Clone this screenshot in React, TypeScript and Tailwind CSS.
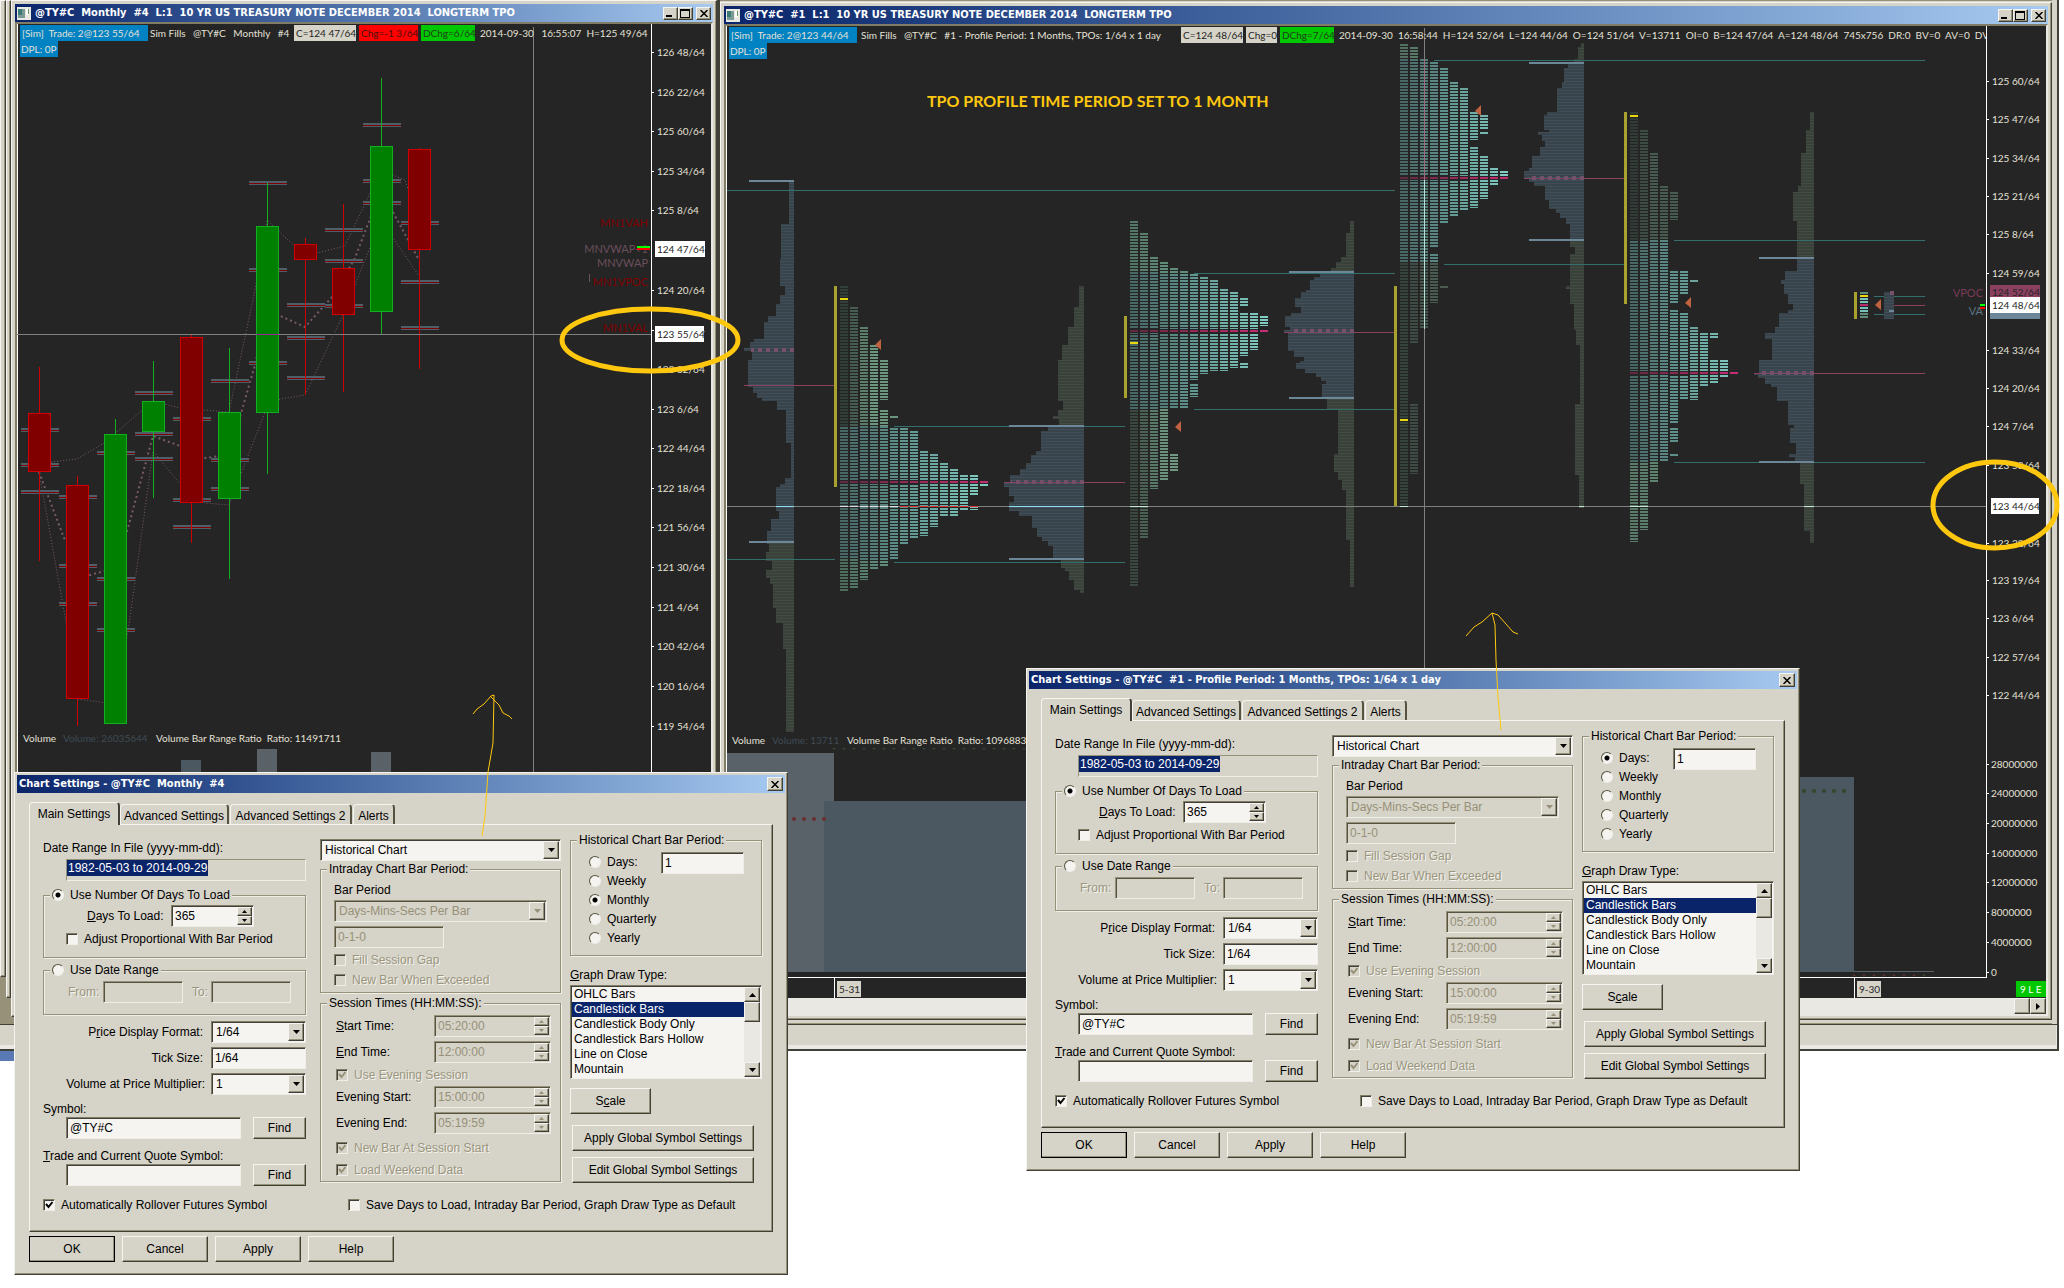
import { useId, type ReactNode } from "react";

const RAISED =
  "bg-[#d6d3c8] border border-t-[#f5f4f0] border-l-[#f5f4f0] border-b-[#404038] border-r-[#404038] shadow-[inset_-1px_-1px_0_#969178]";
const SUNKEN =
  "border border-t-[#807c66] border-l-[#807c66] border-b-[#efeee8] border-r-[#efeee8] shadow-[inset_1px_1px_0_#404038]";
const SUNKEN_OFF =
  "border border-t-[#969178] border-l-[#969178] border-b-[#efeee8] border-r-[#efeee8] shadow-[inset_1px_1px_0_#55523f]";
const GREYED = "text-[#9a967e] [text-shadow:1px_1px_0_#f5f4f0]";

/* ---------- small controls ---------- */

function Tri({ dir, off }: { dir: "up" | "down" | "right"; off?: boolean }) {
  const d = { up: "M0 4h7L3.500 0z", down: "M0 0h7L3.500 4z", right: "M0 0v7L4 3.500z" }[dir];
  return (
    <svg width={dir === "right" ? 4 : 7} height={dir === "right" ? 7 : 4} fill={off ? "#969178" : "#000"}>
      <path d={d} />
    </svg>
  );
}

function Check({ label, checked, off }: { label: string; checked?: boolean; off?: boolean }) {
  return (
    <label className={`flex h-4 items-center gap-1.5 whitespace-nowrap ${off ? GREYED : ""}`}>
      <span className="relative h-3 w-3 shrink-0">
        <input
          type="checkbox"
          defaultChecked={checked}
          disabled={off}
          className={`block h-3 w-3 appearance-none ${SUNKEN} ${off ? "bg-[#d6d3c8]" : "bg-[#f5f4f0]"}`}
        />
        {checked && (
          <svg className="pointer-events-none absolute top-0 left-0" width="12" height="12" fill="none" stroke={off ? "#969178" : "#000"} strokeWidth="2">
            <path d="M3 5l2.500 3L9.500 3" />
          </svg>
        )}
      </span>
      {label}
    </label>
  );
}

function Radio({ name, label, checked }: { name: string; label: string; checked?: boolean }) {
  return (
    <label className="flex items-center gap-1.5 whitespace-nowrap">
      <input
        type="radio"
        name={name}
        defaultChecked={checked}
        className="h-3 w-3 shrink-0 appearance-none rounded-full border border-t-[#55523f] border-l-[#55523f] border-r-[#efeee8] border-b-[#efeee8] bg-[#f5f4f0] checked:bg-[radial-gradient(circle,#000_0_2px,#f5f4f0_3px)]"
      />
      {label}
    </label>
  );
}

function Push({ children, className = "", strong }: { children: ReactNode; className?: string; strong?: boolean }) {
  return (
    <button className={`${RAISED} whitespace-nowrap ${strong ? "outline outline-1 -outline-offset-1 outline-black" : ""} ${className}`}>
      {children}
    </button>
  );
}

function Drop({ id, value, off, className = "", label }: { id?: string; value: string; off?: boolean; className?: string; label?: string }) {
  return (
    <span className={`relative block h-[22px] ${className}`}>
      <select
        id={id}
        aria-label={label}
        disabled={off}
        className={`h-full w-full appearance-none pl-1 opacity-100 ${off ? `${SUNKEN_OFF} bg-[#d6d3c8] text-[#969178]` : `${SUNKEN} bg-[#f5f4f0]`}`}
      >
        <option>{value}</option>
      </select>
      <span className={`pointer-events-none absolute top-0.5 right-0.5 bottom-0.5 flex w-4 items-center justify-center ${RAISED}`}>
        <Tri dir="down" off={off} />
      </span>
    </span>
  );
}

function Spin({ id, value, off, className = "" }: { id: string; value: string; off?: boolean; className?: string }) {
  return (
    <span className={`flex h-[22px] p-px ${off ? `${SUNKEN_OFF} bg-[#d6d3c8]` : `${SUNKEN} bg-[#f5f4f0]`} ${className}`}>
      <input id={id} defaultValue={value} disabled={off} className={`w-0 flex-1 bg-transparent pl-0.5 ${off ? "text-[#969178]" : ""}`} />
      <span className="flex w-[15px] flex-col">
        <button aria-label="Increase" disabled={off} className={`flex flex-1 items-center justify-center ${RAISED}`}>
          <svg width="5" height="3" fill={off ? "#969178" : "#000"}><path d="M0 3h5L2.500 0z" /></svg>
        </button>
        <button aria-label="Decrease" disabled={off} className={`flex flex-1 items-center justify-center ${RAISED}`}>
          <svg width="5" height="3" fill={off ? "#969178" : "#000"}><path d="M0 0h5L2.500 3z" /></svg>
        </button>
      </span>
    </span>
  );
}

function Box({ id, value, off, className = "", label }: { id?: string; value?: string; off?: boolean; className?: string; label?: string }) {
  return (
    <input
      id={id}
      aria-label={label}
      defaultValue={value}
      disabled={off}
      className={`block h-[22px] pl-[3px] ${off ? `${SUNKEN_OFF} bg-[#d6d3c8] text-[#969178]` : `${SUNKEN} bg-[#f5f4f0]`} ${className}`}
    />
  );
}

function Group({ legend, className = "", children }: { legend: ReactNode; className?: string; children: ReactNode }) {
  return (
    <fieldset className={`border border-[#969178] shadow-[1px_1px_0_#efeee8,inset_1px_1px_0_#efeee8] ${className}`}>
      <legend className="ml-1.5 h-3.5 bg-[#d6d3c8] px-0.5 leading-[14px]">{legend}</legend>
      {children}
    </fieldset>
  );
}

/* ---------- settings dialog ---------- */

const DRAW_TYPES = ["OHLC Bars", "Candlestick Bars", "Candlestick Body Only", "Candlestick Bars Hollow", "Line on Close", "Mountain"];
const TABS = [
  { name: "Advanced Settings", width: "w-[109px]" },
  { name: "Advanced Settings 2", width: "w-[122px]" },
  { name: "Alerts", width: "w-[42px]" },
];

function SettingsDialog({ title, period, className }: { title: string; period: string; className: string }) {
  const uid = useId();
  const TimeRow = ({ k, label, value, className: c }: { k: string; label: ReactNode; value: string; className: string }) => (
    <div className={`flex h-[22px] items-center justify-between pr-[9px] pl-[15px] ${c}`}>
      <label htmlFor={uid + k}>{label}</label>
      <Spin id={uid + k} value={value} off className="w-[117px]" />
    </div>
  );
  return (
    <section
      role="dialog"
      aria-label={title}
      className={`absolute flex h-[503px] w-[774px] flex-col p-0.5 font-['Liberation_Sans',Arial,sans-serif] text-xs leading-4 text-black ${RAISED} ${className}`}
    >
      <header className="flex h-[18px] shrink-0 items-center justify-between bg-linear-to-r from-[#0a246a] to-[#a6caf0] pr-0.5 pl-0.5">
        <h2 className="font-['DejaVu_Sans_Condensed','DejaVu_Sans',sans-serif] text-[11px] font-bold whitespace-pre text-white">{title}</h2>
        <button aria-label="Close" className={`flex h-3.5 w-4 items-center justify-center ${RAISED}`}>
          <svg width="8" height="7" stroke="#000" strokeWidth="1.500"><path d="M.5 0l7 7M7.500 0l-7 7" /></svg>
        </button>
      </header>

      <div className="flex flex-col px-3 pt-[9px]">
        <nav role="tablist" className="flex h-[22px] items-end">
          <button role="tab" aria-selected className="relative -mb-px h-[23px] w-[91px] rounded-t-sm border-t border-r-2 border-l border-t-[#f5f4f0] border-r-[#404038] border-l-[#f5f4f0] bg-[#d6d3c8]">
            Main Settings
          </button>
          {TABS.map((t) => (
            <button key={t.name} role="tab" aria-selected={false} className={`mr-px h-5 rounded-t-sm border-t border-r-2 border-l border-t-[#f5f4f0] border-r-[#55523f] border-l-[#f5f4f0] pt-0.5 whitespace-nowrap ${t.width}`}>
              {t.name}
            </button>
          ))}
        </nav>

        <div className="h-[408px] border border-t-[#f5f4f0] border-r-[#404038] border-b-[#404038] border-l-[#f5f4f0] pl-[13px] shadow-[inset_-1px_-1px_0_#969178]">
          <div className="flex">
            {/* data range, format and symbol */}
            <div className="flex w-[263px] flex-col">
              <label htmlFor={uid + "range"} className="mt-[15px] h-4">Date Range In File (yyyy-mm-dd):</label>
              <div id={uid + "range"} className="mt-[3px] ml-[23px] h-[22px] border border-t-[#969178] border-l-[#969178] border-r-[#efeee8] border-b-[#efeee8]">
                <span className="block h-4 w-fit bg-[#0a246a] px-px leading-4 text-white">1982-05-03 to 2014-09-29</span>
              </div>

              <Group className="mt-[7px] h-[70px]" legend={<Radio name={uid + "load"} label="Use Number Of Days To Load" checked />}>
                <div className="mt-[3px] flex h-[22px] items-center pl-[43px]">
                  <label htmlFor={uid + "days"} className="w-[84px]"><u>D</u>ays To Load:</label>
                  <Spin id={uid + "days"} value="365" className="w-[83px]" />
                </div>
                <div className="mt-1 pl-[22px]"><Check label="Adjust Proportional With Bar Period" /></div>
              </Group>
              <Group className="mt-[5px] h-[52px]" legend={<Radio name={uid + "load"} label="Use Date Range" />}>
                <div className="mt-1 flex h-[22px] items-center pl-6">
                  <label htmlFor={uid + "from"} className={`w-[35px] ${GREYED}`}>From:</label>
                  <Box id={uid + "from"} off className="w-20" />
                  <label htmlFor={uid + "to"} className={`ml-[9px] w-[19px] ${GREYED}`}>To:</label>
                  <Box id={uid + "to"} off className="w-20" />
                </div>
              </Group>

              <div className="mt-1.5 flex h-[22px] items-center justify-end gap-2">
                <label htmlFor={uid + "fmt"}>P<u>r</u>ice Display Format:</label>
                <Drop id={uid + "fmt"} value="1/64" className="w-[95px]" />
              </div>
              <div className="mt-1 flex h-[22px] items-center justify-end gap-2">
                <label htmlFor={uid + "tick"}>Tick Size:</label>
                <Box id={uid + "tick"} value="1/64" className="w-[95px]" />
              </div>
              <div className="mt-1 flex h-[22px] items-center justify-end gap-1.5">
                <label htmlFor={uid + "mult"}>Volume at Price Multiplier:</label>
                <Drop id={uid + "mult"} value="1" className="w-[95px]" />
              </div>

              <label htmlFor={uid + "sym"} className="mt-1.5 h-4">Symbol:</label>
              <div className="flex h-[22px] justify-between pl-[23px]">
                <Box id={uid + "sym"} value="@TY#C" className="w-[175px]" />
                <Push className="w-[53px]">Find</Push>
              </div>
              <label htmlFor={uid + "trade"} className="mt-[9px] h-4"><u>T</u>rade and Current Quote Symbol:</label>
              <div className="flex h-[22px] justify-between pl-[23px]">
                <Box id={uid + "trade"} className="w-[175px]" />
                <Push className="w-[53px]">Find</Push>
              </div>
            </div>

            {/* intraday period and session times */}
            <div className="ml-3.5 flex w-[241px] flex-col">
              <Drop value="Historical Chart" label="Chart type" className="mt-3.5 w-full" />
              <Group className="mt-px h-[131px]" legend="Intraday Chart Bar Period:">
                <div className="flex flex-col items-start pl-[13px]">
                  <label htmlFor={uid + "bp"} className="mt-1.5 h-4">Bar Period</label>
                  <Drop id={uid + "bp"} value="Days-Mins-Secs Per Bar" off className="mt-0.5 w-[213px]" />
                  <Box label="Bar period value" value="0-1-0" off className="mt-1 w-[110px]" />
                  <div className="mt-1"><Check label="Fill Session Gap" off /></div>
                  <div className="mt-1"><Check label="New Bar When Exceeded" off /></div>
                </div>
              </Group>
              <Group className="mt-[3px] h-[186px]" legend="Session Times (HH:MM:SS):">
                <TimeRow k="st" label={<><u>S</u>tart Time:</>} value="05:20:00" className="mt-[5px]" />
                <TimeRow k="et" label={<><u>E</u>nd Time:</>} value="12:00:00" className="mt-1" />
                <div className="mt-1 pl-[15px]"><Check label="Use Evening Session" checked off /></div>
                <TimeRow k="es" label="Evening Start:" value="15:00:00" className="mt-[3px]" />
                <TimeRow k="ee" label="Evening End:" value="05:19:59" className="mt-1" />
                <div className="mt-1.5 pl-[15px]"><Check label="New Bar At Session Start" checked off /></div>
                <div className="mt-1.5 pl-[15px]"><Check label="Load Weekend Data" checked off /></div>
              </Group>
            </div>

            {/* historical period and graph type */}
            <div className="ml-[9px] flex w-48 flex-col">
              <Group className="mt-2 h-[123px]" legend="Historical Chart Bar Period:">
                <div className="mt-[5px] flex items-start justify-between pr-[17px] pl-[18px]">
                  <div className="flex flex-col">
                    {["Days:", "Weekly", "Monthly", "Quarterly", "Yearly"].map((p) => (
                      <div key={p} className="flex h-[19px] items-center">
                        <Radio name={uid + "period"} label={p} checked={p === period} />
                      </div>
                    ))}
                  </div>
                  <Box label="Days per bar" value="1" className="w-[83px]" />
                </div>
              </Group>
              <span id={uid + "gdt"} className="mt-[11px] h-4"><u>G</u>raph Draw Type:</span>
              <div className={`mt-0.5 flex h-[94px] bg-[#f5f4f0] p-px ${SUNKEN}`}>
                <ul role="listbox" aria-labelledby={uid + "gdt"} className="flex-1">
                  {DRAW_TYPES.map((t) => (
                    <li key={t} role="option" aria-selected={t === "Candlestick Bars"} className="h-[15px] pl-0.5 leading-[15px] aria-selected:bg-[#0a246a] aria-selected:text-white">
                      {t}
                    </li>
                  ))}
                </ul>
                <div className="flex w-4 flex-col bg-[#e9e8e3]">
                  <button aria-label="Scroll up" className={`flex h-[15px] items-center justify-center ${RAISED}`}><Tri dir="up" /></button>
                  <div className={`h-5 ${RAISED}`} />
                  <button aria-label="Scroll down" className={`mt-auto flex h-[15px] items-center justify-center ${RAISED}`}><Tri dir="down" /></button>
                </div>
              </div>
              <Push className="mt-[9px] h-[26px] w-[81px]">S<u>c</u>ale</Push>
              <Push className="mt-[11px] ml-0.5 h-[26px] w-[182px]">Apply Global Symbol Settings</Push>
              <Push className="mt-1.5 ml-0.5 h-[26px] w-[182px]">Edit Global Symbol Settings</Push>
            </div>
          </div>
          <div className="mt-[11px] flex">
            <div className="w-[305px]"><Check label="Automatically Rollover Futures Symbol" checked /></div>
            <Check label="Save Days to Load, Intraday Bar Period, Graph Draw Type as Default" />
          </div>
        </div>

        <footer className="mt-1 flex gap-[7px]">
          <Push strong className="h-[26px] w-[86px]">OK</Push>
          <Push className="h-[26px] w-[86px]">Cancel</Push>
          <Push className="h-[26px] w-[86px]">Apply</Push>
          <Push className="h-[26px] w-[86px]">Help</Push>
        </footer>
      </div>
    </section>
  );
}

/* ---------- chart windows ---------- */

function ChartWindow({ title, className, children }: { title: string; className: string; children: ReactNode }) {
  return (
    <section aria-label={title} className={`flex flex-col p-[3px] ${RAISED} ${className}`}>
      <header className="flex h-[18px] shrink-0 items-center bg-linear-to-r from-[#0a246a] to-[#a6caf0] px-0.5">
        <svg width="14" height="13" className="shrink-0">
          <rect width="14" height="13" fill="#e9e8e3" />
          <rect x="1" y="2" width="7" height="9" fill="#7a9a94" />
          <rect x="1" y="2" width="4" height="6" fill="#3c7a78" />
          <rect x="9" y="2" width="3" height="6" fill="#fff" />
          <rect x="11" y="2" width="1" height="5" fill="#6a9a6a" />
        </svg>
        <h1 className="ml-1 flex-1 font-['DejaVu_Sans_Condensed','DejaVu_Sans',sans-serif] text-[11px] font-bold whitespace-pre text-white">{title}</h1>
        <button aria-label="Minimize" className={`flex h-[13px] w-[15px] items-end p-0.5 ${RAISED}`}><span className="h-0.5 w-1.5 bg-black" /></button>
        <button aria-label="Maximize" className={`mr-[3px] h-[13px] w-[15px] p-px ${RAISED}`}><span className="block h-full w-[10px] border border-t-2 border-black" /></button>
        <button aria-label="Close" className={`flex h-[13px] w-[15px] items-center justify-center ${RAISED}`}>
          <svg width="8" height="7" stroke="#000" strokeWidth="1.500"><path d="M.5 0l7 7M7.500 0l-7 7" /></svg>
        </button>
      </header>
      <div className="relative flex flex-1 flex-col border-2 border-t-[#807c66] border-r-[#e9e8e3] border-b-[#e9e8e3] border-l-[#807c66] bg-[#252525]">{children}</div>
    </section>
  );
}

type Seg = { text: string; width: string; tone?: string };

function InfoLine({ segs, className }: { segs: Seg[]; className: string }) {
  return (
    <div className={`absolute top-px left-[3px] overflow-hidden font-[Lato,sans-serif] text-[10px] leading-4 whitespace-pre text-[#e4e1d6] ${className}`}>
      <div className="flex h-4">
        {segs.map((s) => (
          <span key={s.text} className={`shrink-0 px-0.5 ${s.width} ${s.tone ?? ""}`}>{s.text}</span>
        ))}
      </div>
      <div className="h-4 w-[38px] bg-[#0082c3] px-px">DPL: 0P</div>
    </div>
  );
}

function AxisLabels({ x, axis, rows }: { x: number; axis: number; rows: [number, string][] }) {
  return (
    <g fill="#e4e1d6">
      {rows.map(([y, t]) => (
        <g key={y}>
          <rect x={axis} y={y} width="3" height="1" fill="#fff" />
          <text x={x} y={y + 4}>{t}</text>
        </g>
      ))}
    </g>
  );
}

const CANDLES: [boolean, number, number, number, number][] = [
  [false, 367, 413, 472, 561], [false, 476, 485, 699, 726], [true, 419, 434, 724, 724], [true, 361, 401, 432, 498],
  [false, 335, 337, 503, 543], [true, 348, 412, 499, 579], [true, 183, 226, 413, 474], [false, 238, 244, 260, 395],
  [false, 204, 268, 315, 392], [true, 78, 146, 312, 334], [false, 148, 149, 250, 369],
];
const LEVELS = [
  [430, 465, 492], [497, 566, 604], [453, 579, 630], [393, 434, 459], [419, 500, 527], [381, 460, 489],
  [183, 270, 363], [305, 338, 378], [230, 261, 306], [125, 181, 203], [223, 282, 328],
];
const LEFT_AXIS: [number, string][] = [
  [52, "126 48/64"], [92, "126 22/64"], [131, "125 60/64"], [171, "125 34/64"], [210, "125 8/64"], [290, "124 20/64"],
  [330, "123 58/64"], [369, "123 32/64"], [409, "123 6/64"], [448, "122 44/64"], [488, "122 18/64"], [527, "121 56/64"],
  [567, "121 30/64"], [607, "121 4/64"], [646, "120 42/64"], [686, "120 16/64"], [726, "119 54/64"],
];

function MonthlyChart() {
  return (
    <svg viewBox="17 24 694 986" preserveAspectRatio="xMinYMin slice" className="block h-[986px] w-full font-[Lato,sans-serif] text-[10px]">
      <rect x="17" y="24" width="1" height="986" fill="#fff" />
      <g fill="none" stroke="#7a5a68" strokeDasharray="1 2">
        <path d="M51 462L77 459 104 443 153 401 180 408 229 412 255 290 267 220 305 256 345 246 381 170 405 180 420 225" />
        <path d="M39 472L66 622 77 699 115 704 129 625 153 451 180 484 205 503 229 505 265 412 280 399 305 395 343 315 381 220 419 276" />
        <path strokeWidth="2" strokeDasharray="2 3" d="M39 472L64 538 90 575 115 568 128 528 153 436 180 446 205 458 229 455 255 365 267 310 305 327 333 296 355 258 381 190 419 260" />
      </g>
      {LEVELS.map((ys, i) =>
        ys.map((y) => (
          <g key={`${i}-${y}`}>
            <rect x={21 + 38 * i} y={y - 2} width="38" height="4" fill="#4d5f69" />
            <rect x={21 + 38 * i} y={y} width="38" height="1" fill="#800000" />
          </g>
        )),
      )}
      {CANDLES.map(([up, hi, top, bottom, lo], i) => (
        <g key={i}>
          <rect x={39 + 38 * i} y={hi} width="1" height={lo - hi} fill={up ? "#10b020" : "#d00000"} />
          <rect x={28.5 + 38 * i} y={top + 0.5} width="22" height={bottom - top - 1} fill={up ? "#008000" : "#800000"} stroke={up ? "#10b020" : "#d00000"} />
        </g>
      ))}
      <g fill="#5a6268">
        <rect x="181" y="760" width="20" height="250" fill="#4b5861" />
        <rect x="257" y="749" width="20" height="261" />
        <rect x="371" y="752" width="20" height="258" />
      </g>
      <rect x="17" y="334" width="635" height="1" fill="#808080" />
      <rect x="256" y="334" width="23" height="1" fill="#a020a0" />
      <rect x="533" y="27" width="1" height="983" fill="#808080" />
      <rect x="651" y="24" width="1" height="986" fill="#fff" />
      <AxisLabels x={657} axis={651} rows={LEFT_AXIS} />
      <g fill="#800000" textAnchor="end" className="text-[11px]">
        <text x="648" y="227">MN1VAH</text>
        <text x="648" y="253" fill="#6b4f5c">MNVWAP+1</text>
        <text x="648" y="267" fill="#6b4f5c">MNVWAP</text>
        <text x="648" y="286">MN1VPOC</text>
        <text x="648" y="332">MN1VAL</text>
      </g>
      <rect x="589" y="274" width="1" height="8" fill="#6b4f5c" />
      <rect x="637" y="246" width="13" height="2" fill="#00ff00" />
      <rect x="637" y="248" width="13" height="2" fill="#ff0000" />
      <rect x="655" y="241" width="50" height="16" fill="#fff" />
      <rect x="655" y="326" width="49" height="16" fill="#fff" />
      <g fill="#252525">
        <text x="657" y="253">124 47/64</text>
        <text x="657" y="338">123 55/64</text>
      </g>
      <g fill="#e4e1d6">
        <text x="23" y="742">Volume</text>
        <text x="63" y="742" fill="#3f4b54">Volume: 26035644</text>
        <text x="156" y="742" xmlSpace="preserve">Volume Bar Range Ratio  Ratio: 11491711</text>
      </g>
    </svg>
  );
}

type RGB = [number, number, number];
type Tpo = {
  x: number;
  cols: number[][];
  va: [number, number];
  poc: number;
  open: number;
  range: [number, number];
  arrow: number[];
  above: [RGB, RGB];
  below: [RGB, RGB];
};

/* Each column lists alternating start / end heights. */
const TPOS: Tpo[] = [
  {
    x: 840, va: [426, 560], poc: 482, open: 299, range: [286, 487], arrow: [875, 345],
    above: [[50, 62, 56], [108, 150, 126]], below: [[78, 108, 92], [96, 140, 122]],
    cols: [[286, 592], [307, 589], [327, 580], [345, 569], [360, 400, 410, 566], [416, 418, 428, 560], [428, 545], [431, 539], [451, 536], [454, 527], [463, 516], [469, 516], [475, 510], [475, 495, 506, 510], [484, 486]],
  },
  {
    x: 1130, va: [273, 409], poc: 331, open: 343, range: [316, 398], arrow: [1175, 427],
    above: [[84, 118, 102], [96, 140, 122]], below: [[58, 72, 64], [112, 152, 130]],
    cols: [[221, 586], [233, 539], [257, 489], [262, 480], [268, 409, 454, 471], [271, 409], [274, 380, 384, 397], [277, 374], [280, 371], [289, 371], [292, 368], [298, 306, 313, 356, 363, 368], [313, 350], [316, 326]],
  },
  {
    x: 1400, va: [59, 264], poc: 178, open: 420, range: [286, 507], arrow: [1475, 111],
    above: [[84, 112, 98], [96, 130, 112]], below: [[54, 66, 60], [74, 92, 82]],
    cols: [[44, 507], [47, 344, 404, 474], [59, 329], [62, 247, 254, 303], [68, 223, 286, 288], [82, 217], [88, 211], [112, 140, 147, 208], [115, 129, 132, 134, 156, 199], [168, 185], [171, 177]],
  },
  {
    x: 1630, va: [240, 462], poc: 373, open: 116, range: [112, 304], arrow: [1685, 303],
    above: [[50, 60, 55], [72, 92, 82]], below: [[90, 122, 106], [96, 134, 114]],
    cols: [[112, 542], [130, 530], [153, 483], [186, 462], [192, 220, 271, 303, 310, 424, 428, 442, 454, 456], [271, 294, 313, 400], [280, 282, 327, 400], [333, 386], [333, 338, 360, 383], [360, 377], []],
  },
  {
    x: 1860, va: [298, 314], poc: 305, open: 296, range: [292, 319], arrow: [1875, 305],
    above: [[96, 140, 122], [96, 140, 122]], below: [[96, 140, 122], [96, 140, 122]],
    cols: [[292, 319]],
  },
];

function mix([a, b]: [RGB, RGB], t: number) {
  return `rgb(${a.map((v, i) => Math.round(v + (b[i] - v) * t)).join(",")})`;
}

function TpoProfile({ p }: { p: Tpo }) {
  const n = p.cols.length - 1;
  const cell = (i: number, from: number, to: number, fill: string) =>
    to > from && <path key={`${i}-${from}-${fill}`} d={`M${p.x + 10 * i + 4} ${from}V${to}`} stroke={fill} strokeWidth="8" strokeDasharray="2 1" />;
  return (
    <g>
      <rect x={p.x - 6} y={p.range[0]} width="3" height={p.range[1] - p.range[0]} fill="#aaa22f" />
      {p.cols.map((c, i) => {
        const t = n === 0 ? 0.9 : i / n;
        const parts: ReactNode[] = [];
        const snap = (v: number) => c[0] + Math.round((v - c[0]) / 3) * 3;
        for (let k = 0; k < c.length; k += 2) {
          const [s, e] = [c[k], c[k + 1]];
          const a = Math.min(e, Math.max(s, snap(p.va[0])));
          const b = Math.min(e, Math.max(s, snap(p.va[1])));
          parts.push(cell(i, s, a, mix(p.above, Math.min(1, t * 5))));
          parts.push(cell(i, a, b, mix([[72, 104, 102], [128, 204, 194]], t)));
          parts.push(cell(i, b, e, mix(p.below, Math.min(1, t * 4))));
        }
        return (
          <g key={i}>
            {parts}
            <rect x={p.x + 10 * i} y={p.poc - 2} width="8" height="4" fill="#252525" />
            <rect x={p.x + 10 * i} y={p.poc - 1} width="8" height="2" fill={mix([[100, 40, 66], [196, 46, 116]], t)} />
          </g>
        );
      })}
      <rect x={p.x} y={p.open - 1} width="8" height="2" fill="#e8d810" />
      <path d={`M${p.arrow[0]} ${p.arrow[1]}l6 -6v11z`} fill="#c0623f" />
    </g>
  );
}

type Vol = { right: number; va: [number, number]; end: number; poc: number; steps: [number, number][] };

const VOLUMES: Vol[] = [
  { right: 794, va: [181, 542], end: 732, poc: 350, steps: [[181, 789], [224, 781], [259, 780], [286, 785], [295, 780], [304, 776], [316, 768], [322, 764], [339, 754], [342, 750], [348, 744], [351, 752], [360, 748], [387, 753], [393, 757], [398, 762], [401, 777], [410, 786], [443, 791], [478, 785], [484, 780], [487, 776], [511, 779], [519, 771], [531, 767], [544, 769], [552, 766], [561, 772], [570, 766], [578, 770], [584, 773], [608, 776], [623, 783], [649, 786]] },
  { right: 1084, va: [426, 559], end: 593, poc: 482, steps: [[286, 1079], [307, 1074], [327, 1068], [345, 1062], [360, 1058], [401, 1063], [410, 1058], [416, 1053], [419, 1059], [426, 1048], [431, 1041], [451, 1036], [455, 1031], [463, 1026], [469, 1020], [475, 1010], [482, 1004], [487, 1009], [496, 1014], [502, 1009], [511, 1019], [516, 1032], [528, 1037], [537, 1042], [541, 1048], [546, 1053], [559, 1061], [568, 1065], [571, 1069], [580, 1074], [590, 1080]] },
  { right: 1354, va: [272, 398], end: 587, poc: 331, steps: [[221, 1350], [233, 1346], [257, 1341], [262, 1336], [268, 1331], [272, 1326], [274, 1320], [277, 1314], [280, 1310], [290, 1306], [292, 1301], [298, 1295], [307, 1301], [313, 1291], [316, 1285], [327, 1290], [330, 1284], [333, 1288], [351, 1294], [357, 1304], [361, 1300], [363, 1296], [369, 1305], [373, 1316], [377, 1321], [381, 1326], [384, 1322], [398, 1327], [409, 1338], [454, 1334], [472, 1338], [480, 1342], [490, 1346], [540, 1350]] },
  { right: 1584, va: [63, 240], end: 508, poc: 178, steps: [[43, 1581], [47, 1578], [59, 1574], [63, 1568], [68, 1564], [82, 1562], [88, 1557], [112, 1547], [115, 1544], [130, 1549], [132, 1538], [135, 1542], [141, 1545], [147, 1540], [156, 1532], [168, 1529], [171, 1524], [179, 1529], [182, 1534], [186, 1545], [200, 1549], [209, 1556], [213, 1560], [218, 1566], [224, 1570], [247, 1575], [254, 1570], [286, 1566], [289, 1570], [304, 1574], [330, 1576], [345, 1580], [404, 1575], [475, 1579]] },
  { right: 1814, va: [258, 462], end: 543, poc: 373, steps: [[112, 1810], [130, 1806], [153, 1801], [186, 1798], [192, 1793], [221, 1797], [271, 1785], [280, 1781], [284, 1784], [294, 1788], [304, 1793], [310, 1788], [313, 1779], [327, 1775], [333, 1765], [339, 1772], [360, 1759], [373, 1754], [375, 1758], [378, 1765], [384, 1771], [387, 1777], [401, 1788], [425, 1794], [428, 1790], [443, 1796], [454, 1789], [457, 1795], [462, 1800], [484, 1804], [531, 1810]] },
];

/* [x1, x2, y] */
const TEAL = [[727, 1395, 190], [727, 835, 559], [894, 1125, 426], [894, 1125, 562], [1194, 1395, 273], [1194, 1395, 409], [1434, 1925, 60], [1444, 1624, 264], [1674, 1925, 240], [1674, 1925, 462], [1874, 1925, 296], [1874, 1925, 314]];
const ROSE = [[744, 834, 385], [1004, 1125, 482], [1284, 1395, 332], [1524, 1624, 178], [1754, 1925, 373], [1884, 1925, 305]];
const RIGHT_AXIS: [number, string][] = [
  [81, "125 60/64"], [119, "125 47/64"], [158, "125 34/64"], [196, "125 21/64"], [234, "125 8/64"], [273, "124 59/64"],
  [350, "124 33/64"], [388, "124 20/64"], [426, "124 7/64"], [465, "123 58/64"], [543, "123 32/64"], [580, "123 19/64"],
  [618, "123 6/64"], [657, "122 57/64"], [695, "122 44/64"],
];
const VOLUME_AXIS: [number, string][] = [
  [764, "28000000"], [793, "24000000"], [823, "20000000"], [853, "16000000"], [882, "12000000"], [912, "8000000"], [942, "4000000"], [972, "0"],
];

function ProfileChart() {
  return (
    <svg viewBox="726 26 1320 972" preserveAspectRatio="xMinYMin slice" className="block h-[972px] w-full font-[Lato,sans-serif] text-[10px]">
      <defs>
        <pattern id="vaStripe" width="3" height="3" patternUnits="userSpaceOnUse"><rect width="3" height="3" fill="#38434a" /><rect width="3" height="1" fill="#3f4e5a" /></pattern>
        <pattern id="outStripe" width="3" height="3" patternUnits="userSpaceOnUse"><rect width="3" height="3" fill="#3a413a" /><rect width="3" height="1" fill="#414b42" /></pattern>
      </defs>
      <rect x="726" y="26" width="1" height="950" fill="#fff" />

      {VOLUMES.map((v) => (
        <g key={v.right}>
          {v.steps.map(([y, x], i) => {
            const end = v.steps[i + 1]?.[0] ?? v.end;
            const a = Math.min(end, Math.max(y, v.va[0]));
            const b = Math.min(end, Math.max(y, v.va[1]));
            return (
              <g key={y}>
                {a > y && <rect x={x} y={y} width={v.right - x} height={a - y} fill="url(#outStripe)" />}
                {b > a && <rect x={x} y={a} width={v.right - x} height={b - a} fill="url(#vaStripe)" />}
                {end > b && <rect x={x} y={b} width={v.right - x} height={end - b} fill="url(#outStripe)" />}
              </g>
            );
          })}
        </g>
      ))}
      {TEAL.map(([a, b, y]) => <rect key={`${a}-${y}`} x={a} y={y} width={b - a} height="1" fill="#336f6c" />)}
      {ROSE.map(([a, b, y]) => <rect key={`${a}-${y}`} x={a} y={y} width={b - a} height="1" fill="#8b4060" />)}
      {VOLUMES.map((v) => {
        const w = v.right === 794 ? 45 : v.right === 1084 ? 75 : v.right === 1354 ? 65 : 55;
        return (
          <g key={v.right}>
            <rect x={v.right - w} y={v.va[0] - 1} width={w} height="2" fill="#6b8798" />
            <rect x={v.right - w} y={v.va[1] - 1} width={w} height="2" fill="#6b8798" />
            <path d={`M${v.right} ${v.poc}H${v.right - w + 2}`} stroke="#74506a" strokeWidth="4" strokeDasharray="4 4" />
          </g>
        );
      })}
      <rect x="1884" y="292" width="10" height="27" fill="url(#vaStripe)" />
      <rect x="1890" y="291" width="4" height="4" fill="#74506a" />
      <rect x="1889" y="310" width="5" height="2" fill="#6b8798" />

      {TPOS.map((p) => <TpoProfile key={p.x} p={p} />)}

      {/* lower volume region */}
      <rect x="727" y="753" width="107" height="219" fill="#5a6269" />
      <rect x="824" y="801" width="310" height="171" fill="#4b5861" />
      <rect x="1124" y="777" width="730" height="195" fill="#4b5861" />
      <rect x="1854" y="971" width="80" height="1" fill="#5a6269" />
      {[794, 804, 814, 824].map((x) => <circle key={x} cx={x} cy="819" r="2" fill="#6a3030" />)}
      {[1804, 1814, 1824, 1834, 1844].map((x) => <circle key={x} cx={x} cy="791" r="2" fill="#33472c" />)}
      {Array.from({ length: 20 }, (_, i) => <path key={i} d={`M${832 + 10 * i} 748h4l-2 2z`} fill="#33472c" />)}
      {Array.from({ length: 8 }, (_, i) => <path key={i} d={`M${1852 + 10 * i} 976h4l-2 -2z`} fill={i === 7 ? "#33472c" : "#5a3030"} />)}

      {/* crosshair */}
      <rect x="727" y="506" width="1259" height="1" fill="#808080" />
      <rect x="1424" y="28" width="1" height="680" fill="#808080" />
      <rect x="1424" y="59" width="1" height="270" fill="#a06a80" />
      <rect x="1424" y="180" width="1" height="149" fill="#b8e0d8" />
      <rect x="776" y="506" width="18" height="1" fill="#8fdff0" />
      <rect x="1009" y="506" width="75" height="1" fill="#8fdff0" />
      <path d="M840 506.500h60" stroke="#e8d8e0" strokeDasharray="8 2" />
      <path d="M900 506.500h78" stroke="#e03030" strokeDasharray="8 2" />
      <path d="M1130 506.500h18M1400 506.500h8M1579 506.500h5M1630 506.500h18M1804 506.500h10" stroke="#c8e8d8" />

      {/* axes */}
      <rect x="1986" y="26" width="1" height="952" fill="#fff" />
      <rect x="727" y="977" width="1260" height="1" fill="#fff" />
      <rect x="834" y="977" width="1" height="21" fill="#fff" />
      <rect x="1854" y="977" width="1" height="21" fill="#fff" />
      <AxisLabels x={1992} axis={1986} rows={RIGHT_AXIS} />
      <AxisLabels x={1991} axis={1986} rows={VOLUME_AXIS} />
      <g className="text-[11px]">
        <text x="1983" y="297" textAnchor="end" fill="#7a3a57">VPOC</text>
        <text x="1983" y="315" textAnchor="end" fill="#5d7686">VA</text>
      </g>
      <rect x="1980" y="304" width="5" height="2" fill="#00ff00" />
      <rect x="1980" y="307" width="5" height="2" fill="#ff0000" />
      <rect x="1990" y="285" width="50" height="12" fill="#8b4060" />
      <rect x="1990" y="297" width="50" height="16" fill="#fff" />
      <rect x="1990" y="313" width="50" height="6" fill="#6b8798" />
      <rect x="1991" y="498" width="48" height="16" fill="#fff" />
      <rect x="837" y="981" width="24" height="16" fill="#d6d3c8" />
      <rect x="1857" y="981" width="24" height="16" fill="#d6d3c8" />
      <rect x="2016" y="981" width="30" height="16" fill="#00c800" />
      <g fill="#252525">
        <text x="1992" y="296">124 52/64</text>
        <text x="1992" y="309">124 48/64</text>
        <text x="1992" y="510">123 44/64</text>
        <text x="839" y="993">5-31</text>
        <text x="1859" y="993">9-30</text>
        <text x="2020" y="993" fill="#fff">9 L E</text>
      </g>
      <g fill="#e4e1d6">
        <text x="732" y="744">Volume</text>
        <text x="772" y="744" fill="#3f4b54">Volume: 13711</text>
        <text x="847" y="744" xmlSpace="preserve">Volume Bar Range Ratio  Ratio: 1096883</text>
      </g>
      <text x="927" y="107" fill="#ffc80f" className="text-[16px] font-bold">TPO PROFILE TIME PERIOD SET TO 1 MONTH</text>
    </svg>
  );
}

const SIM = "bg-[#0082c3]";
const PALE = "bg-[#d6d3c8] text-[#252525]";
const GREEN = "bg-[#00c800] text-[#20401a]";

export default function App() {
  return (
    <main className="relative min-h-screen w-full overflow-hidden bg-white">
      <div className="mr-[5px] flex h-[1024px] items-start overflow-hidden bg-[#969178]">
        <div className={`h-[977px] w-1.5 shrink-0 ${RAISED}`} />
        <div className={`h-[998px] w-[5px] shrink-0 ${RAISED}`} />
        <ChartWindow title="@TY#C  Monthly  #4  L:1  10 YR US TREASURY NOTE DECEMBER 2014  LONGTERM TPO" className="h-[1017px] w-[706px] shrink-0">
          <MonthlyChart />
          <InfoLine
            className="right-[60px]"
            segs={[
              { text: "[Sim]  Trade: 2@123 55/64", width: "w-[128px]", tone: SIM },
              { text: "Sim Fills", width: "w-[43px]" },
              { text: "@TY#C   Monthly   #4", width: "w-[103px]" },
              { text: "C=124 47/64", width: "w-[62px]", tone: PALE },
              { text: "Chg=-1 3/64", width: "ml-[3px] w-[59px]", tone: "bg-[#ff0000] text-[#4a1010]" },
              { text: "DChg=6/64", width: "ml-[3px] w-[54px]", tone: GREEN },
              { text: "2014-09-30   16:55:07  H=125 49/64  L", width: "ml-[3px]" },
            ]}
          />
        </ChartWindow>
        <div className="h-full w-[3px] shrink-0 bg-[#404038]" />
        <div className="flex h-full min-w-0 flex-1 flex-col border-r-2 border-[#404038] bg-[#d6d3c8] pr-[5px]">
          <div className="mb-px h-[1px] shrink-0 bg-[#969178]" />
          <ChartWindow title="@TY#C  #1  L:1  10 YR US TREASURY NOTE DECEMBER 2014  LONGTERM TPO" className="h-[1018px] w-full shrink-0">
            <ProfileChart />
            <InfoLine
              className="right-[60px]"
              segs={[
                { text: "[Sim]  Trade: 2@123 44/64", width: "w-[128px]", tone: SIM },
                { text: "Sim Fills", width: "ml-0.5 w-[43px]" },
                { text: "@TY#C   #1 - Profile Period: 1 Months, TPOs: 1/64 x 1 day", width: "w-[279px]" },
                { text: "C=124 48/64", width: "w-[62px]", tone: PALE },
                { text: "Chg=0", width: "ml-[3px] w-[31px]", tone: PALE },
                { text: "DChg=7/64", width: "ml-[3px] w-[54px]", tone: GREEN },
                {
                  text: "2014-09-30  16:58:44  H=124 52/64  L=124 44/64  O=124 51/64  V=13711  OI=0  B=124 47/64  A=124 48/64  745x756  DR:0  BV=0  AV=0  DV=1",
                  width: "ml-[3px]",
                },
              ]}
            />
            <div className="flex flex-1 justify-end bg-[#e9e8e3]">
              <div className={`w-4 ${RAISED}`} />
              <button aria-label="Scroll right" className={`flex w-4 items-center justify-center ${RAISED}`}><Tri dir="right" /></button>
            </div>
          </ChartWindow>
          <div className="mt-[3px] h-0.5 shrink-0 border-t border-[#969178] bg-[#404038]" />
        </div>
      </div>
      <div className="mr-[5px] h-[27px] border-t border-r-2 border-b-2 border-t-[#404038] border-r-[#404038] border-b-[#404038] bg-[#d6d3c8] p-1 shadow-[inset_-1px_-4px_0_#e9e8e3]" />
      <div className="h-2.5 w-3.5 bg-[#5a7ab5]" />

      <SettingsDialog title="Chart Settings - @TY#C  Monthly  #4" period="Monthly" className="top-[772px] left-[14px]" />
      <SettingsDialog title="Chart Settings - @TY#C  #1 - Profile Period: 1 Months, TPOs: 1/64 x 1 day" period="Days:" className="top-[668px] left-[1026px]" />

      {/* hand-drawn annotations */}
      <svg width="2064" height="1288" className="pointer-events-none absolute top-0 left-0" fill="none" stroke="#ffc80f">
        <ellipse cx="650" cy="340" rx="88" ry="31" strokeWidth="5" />
        <ellipse cx="1995" cy="505" rx="62" ry="43" strokeWidth="5" />
        <path d="M482 836L485 816 488 772 493 743 494 695M473 714l4 -5 7 -5 7 -8 3 -1M491 697l8 8 4 8 6 3 3 3" />
        <path d="M1501 730L1498 697 1496 660 1495 625 1492 613M1466 636l8 -9 8 -5 10 -9 6 2 8 9 7 8 5 2" />
      </svg>
    </main>
  );
}
